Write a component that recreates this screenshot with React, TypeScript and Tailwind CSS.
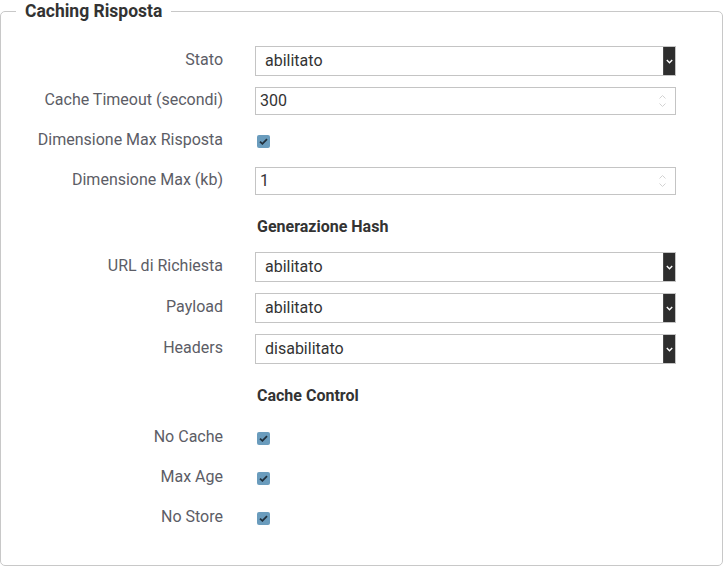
import React from "react";

type Row =
  | { kind: "select"; label: string; value: string }
  | { kind: "number"; label: string; value: string }
  | { kind: "check"; label: string };

const first: Row[] = [
  { kind: "select", label: "Stato", value: "abilitato" },
  { kind: "number", label: "Cache Timeout (secondi)", value: "300" },
  { kind: "check", label: "Dimensione Max Risposta" },
  { kind: "number", label: "Dimensione Max (kb)", value: "1" },
];

const hash: Row[] = [
  { kind: "select", label: "URL di Richiesta", value: "abilitato" },
  { kind: "select", label: "Payload", value: "abilitato" },
  { kind: "select", label: "Headers", value: "disabilitato" },
];

const control: Row[] = [
  { kind: "check", label: "No Cache" },
  { kind: "check", label: "Max Age" },
  { kind: "check", label: "No Store" },
];

function SelectBox({ value }: { value: string }) {
  return (
    <div className="flex h-[30px] w-[421px] items-stretch border border-[#c4c4c4] bg-white">
      <span className="flex-1 pl-[9px] text-[16px] leading-[28px] text-[#333]">{value}</span>
      <span className="flex w-[12px] items-center justify-center border-l border-[#4a4a4a] bg-[#2e2e2e]">
        <svg width="7" height="5" viewBox="0 0 7 5">
          <path d="M0.8 1 L3.5 3.8 L6.2 1" fill="none" stroke="#fff" strokeWidth="1.4" />
        </svg>
      </span>
    </div>
  );
}

function NumberBox({ value }: { value: string }) {
  return (
    <div className="flex h-[28px] w-[421px] items-center border border-[#c4c4c4] bg-white">
      <span className="flex-1 pl-[4px] text-[16px] leading-[26px] text-[#333]">{value}</span>
      <span className="mr-[9px] flex flex-col items-center gap-[4px]">
        <svg width="7" height="4" viewBox="0 0 7 4">
          <path d="M0.5 3.5 L3.5 0.5 L6.5 3.5" fill="none" stroke="#d2d2d2" strokeWidth="1" />
        </svg>
        <svg width="7" height="4" viewBox="0 0 7 4">
          <path d="M0.5 0.5 L3.5 3.5 L6.5 0.5" fill="none" stroke="#d2d2d2" strokeWidth="1" />
        </svg>
      </span>
    </div>
  );
}

function CheckBox() {
  return (
    <span className="ml-[2px] flex h-[13px] w-[13px] items-center justify-center rounded-[2px] bg-[#6a9cbd]">
      <svg width="9" height="7" viewBox="0 0 9 7">
        <path d="M1 3.6 L3.4 5.8 L8 1.2" fill="none" stroke="#22303c" strokeWidth="1.8" />
      </svg>
    </span>
  );
}

function FormRow({ row, className = "" }: { row: Row; className?: string }) {
  return (
    <div className={`flex h-[30px] items-start gap-[32px] ${className}`}>
      <label className="w-[222px] pt-[4px] text-right text-[16px] leading-[20px] text-[#5c5d66]">
        {row.label}
      </label>
      <div className="flex h-[30px] items-center">
        {row.kind === "select" && <SelectBox value={row.value} />}
        {row.kind === "number" && <NumberBox value={row.value} />}
        {row.kind === "check" && <CheckBox />}
      </div>
    </div>
  );
}

function Heading({ children, className = "" }: { children: React.ReactNode; className?: string }) {
  return (
    <div className={`flex ${className}`}>
      <div className="w-[222px]" />
      <h3 className="ml-[34px] text-[16px] font-bold leading-[20px] text-[#333]">{children}</h3>
    </div>
  );
}

export default function App() {
  return (
    <div className="h-[566px] w-[723px] bg-white" style={{ fontFamily: "Roboto, 'Liberation Sans', sans-serif" }}>
      <fieldset className="h-[566px] w-[723px] rounded-[5px] border border-[#c8c8c8] px-0 pb-0">
        <legend className="ml-[15px] px-[9px] text-[17.5px] font-bold leading-[22px] text-[#333]">
          Caching Risposta
        </legend>
        <div className="flex flex-col pt-[24px]">
          {first.map((r, i) => (
            <FormRow key={r.label} row={r} className={i > 0 ? "mt-[10px]" : ""} />
          ))}
          <Heading className="mt-[21px]">Generazione Hash</Heading>
          {hash.map((r, i) => (
            <FormRow key={r.label} row={r} className={i > 0 ? "mt-[11px]" : "mt-[15px]"} />
          ))}
          <Heading className="mt-[22px]">Cache Control</Heading>
          {control.map((r, i) => (
            <FormRow key={r.label} row={r} className={i > 0 ? "mt-[10px]" : "mt-[17px]"} />
          ))}
        </div>
      </fieldset>
    </div>
  );
}
